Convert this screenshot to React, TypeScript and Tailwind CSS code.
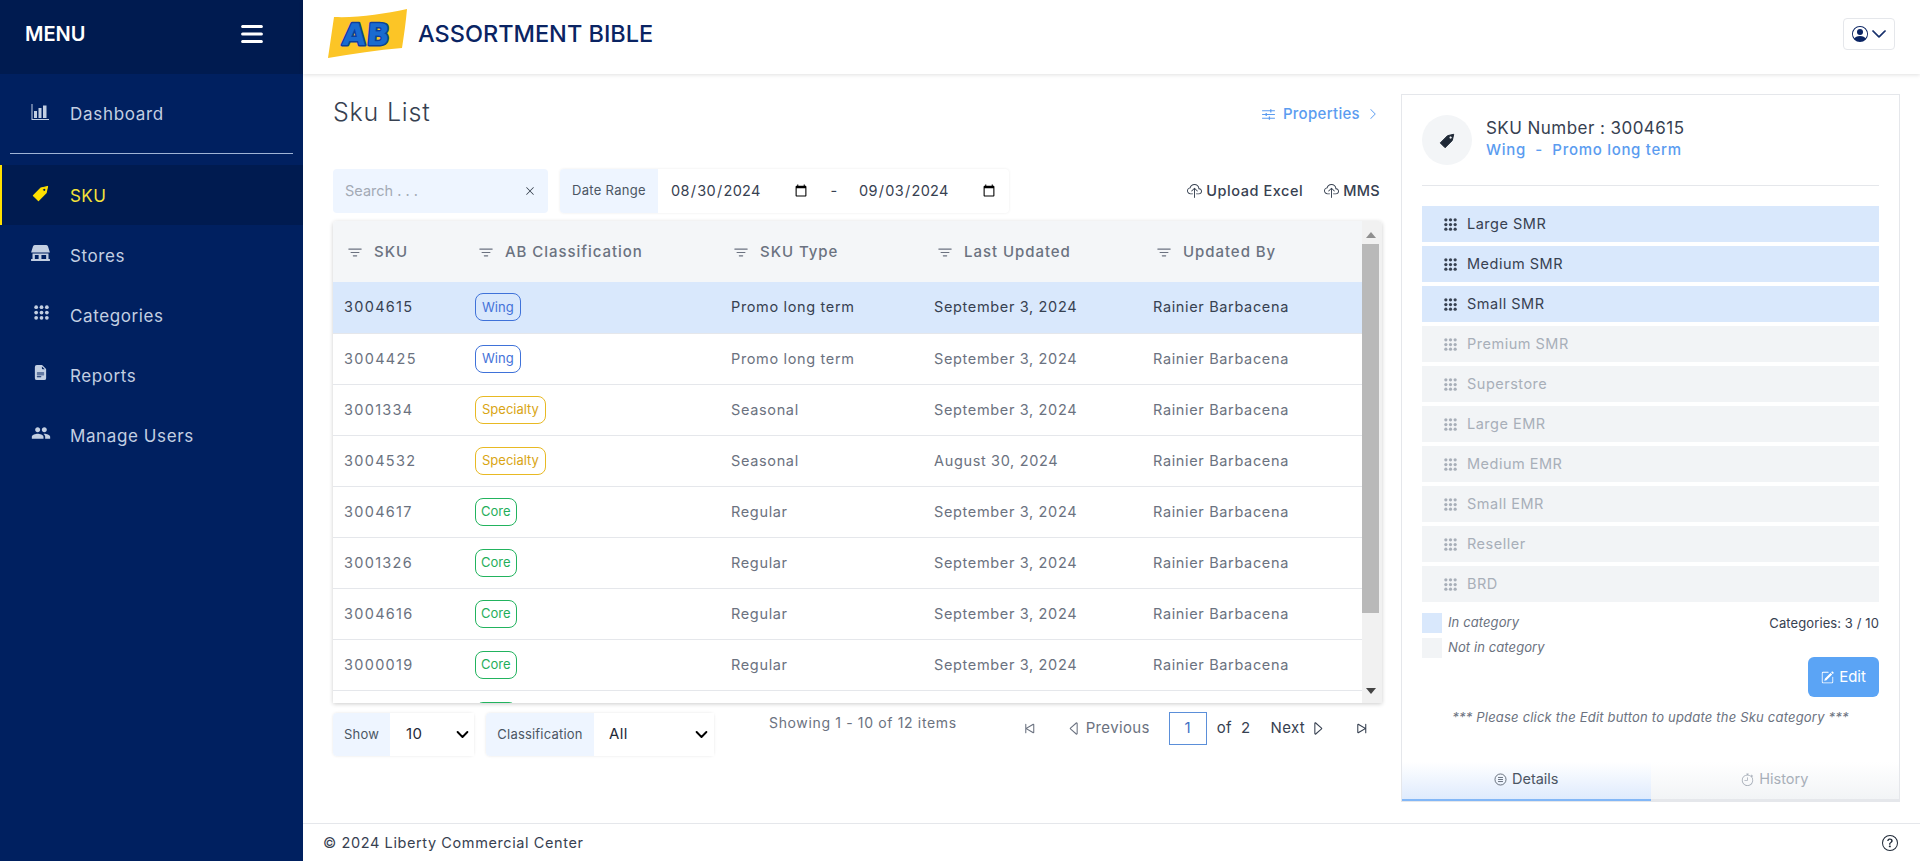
import React from "react";
import {
  BsFilter, BsFileEarmarkTextFill, BsCloudUpload, BsSkipStart, BsSkipEnd,
  BsCaretLeft, BsCaretRight, BsPencilSquare, BsQuestionCircle, BsPersonCircle, BsChevronDown,
  BsChevronRight, BsStopwatch, BsXLg, BsList,
} from "react-icons/bs";
import { MdPeople } from "react-icons/md";

const Tag = ({ className }: { className?: string }) => (
  <svg viewBox="0 0 24 24" className={className} fill="currentColor" stroke="currentColor" strokeWidth="1.4" strokeLinejoin="round">
    <path fillRule="evenodd" d="M1.8 15.4 12 5.2 20.8 3.2 18.8 12 8.6 22.2Z M16.4 5.6a2.2 2.2 0 1 0 2.2 2.2 2.2 2.2 0 0 0-2.2-2.2Z" />
  </svg>
);

const Bars = ({ className }: { className?: string }) => (
  <svg viewBox="0 0 17 16" className={className} fill="currentColor">
    <path d="M0 0h1v15h17v1H0z" />
    <rect x="2.5" y="7" width="3" height="7" />
    <rect x="7" y="4" width="3" height="10" />
    <rect x="11.5" y="1.5" width="3.5" height="12.5" />
  </svg>
);

const Store = ({ className }: { className?: string }) => (
  <svg viewBox="0 0 20 17" className={className} fill="currentColor">
    <path d="M4 0h12a2 2 0 0 1 2 1.6L20 8H0l2-6.4A2 2 0 0 1 4 0Z" />
    <path fillRule="evenodd" d="M1.5 9h17v6H20v2H0v-2h1.5Zm2.5 1.5V15h4v-4.5Zm7 0V15h5v-4.5Z" />
  </svg>
);

const Dots = ({ className }: { className?: string }) => (
  <svg viewBox="0 0 14 14" className={className} fill="currentColor">
    {[2, 7, 12].flatMap((y) => [2, 7, 12].map((x) => <circle key={`${x}-${y}`} cx={x} cy={y} r="1.75" />))}
  </svg>
);

const Details = ({ className }: { className?: string }) => (
  <svg viewBox="0 0 16 16" className={className} fill="none" stroke="currentColor" strokeWidth="1">
    <circle cx="8" cy="8" r="6.8" />
    <path d="M5 5.5h6M5 8h6M5 10.5h6" />
  </svg>
);

const Sliders = ({ className }: { className?: string }) => (
  <svg viewBox="0 0 14 12" className={className} fill="none" stroke="currentColor" strokeWidth="1.1">
    <path d="M0 2h14M0 6h14M0 10h14" />
    <path d="M9.5 0.3v3.4M4.5 4.3v3.4M8 8.3v3.4" strokeWidth="1.4" />
  </svg>
);

const nav = [
  { label: "Stores", icon: <Store className="w-[19px] h-[16px]" /> },
  { label: "Categories", icon: <Dots className="w-[15px] h-[15px] ml-[3px]" /> },
  { label: "Reports", icon: <BsFileEarmarkTextFill className="w-[15px] h-[17px] ml-[2px]" /> },
  { label: "Manage Users", icon: <MdPeople className="w-[20px] h-[20px]" /> },
];

type Row = [string, "Wing" | "Specialty" | "Core", string, string];
const rows: Row[] = [
  ["3004615", "Wing", "Promo long term", "September 3, 2024"],
  ["3004425", "Wing", "Promo long term", "September 3, 2024"],
  ["3001334", "Specialty", "Seasonal", "September 3, 2024"],
  ["3004532", "Specialty", "Seasonal", "August 30, 2024"],
  ["3004617", "Core", "Regular", "September 3, 2024"],
  ["3001326", "Core", "Regular", "September 3, 2024"],
  ["3004616", "Core", "Regular", "September 3, 2024"],
  ["3000019", "Core", "Regular", "September 3, 2024"],
  ["3000021", "Core", "Regular", "September 3, 2024"],
];

const badge: Record<string, string> = {
  Wing: "border-[#3f72d9] text-[#4472d9] px-[6px]",
  Specialty: "border-[#e8b923] text-[#d9a514] px-[6px]",
  Core: "border-[#22b35e] text-[#1fae5a] px-[5px]",
};

const heads = [
  ["SKU", "w-[130px] pl-[13px]"],
  ["AB Classification", "w-[256px] pl-[14px]"],
  ["SKU Type", "w-[203px] pl-[13px]"],
  ["Last Updated", "w-[219px] pl-[14px]"],
  ["Updated By", "pl-[14px]"],
];

const td = "h-[51px] border-b border-[#e5e7eb] pl-[12px] text-[14.5px] tracking-[0.65px]";

const cats = ["Large SMR", "Medium SMR", "Small SMR", "Premium SMR", "Superstore", "Large EMR", "Medium EMR", "Small EMR", "Reseller", "BRD"];

export default function App() {
  return (
    <div className="flex h-[861px] w-[1920px] overflow-hidden bg-white text-[#4b5563] [font-family:Inter,'Open_Sans',sans-serif]">
      {/* Sidebar */}
      <aside className="w-[303px] shrink-0 bg-[#002060] text-[#c3cfe2] flex flex-col">
        <div className="h-[74px] pb-[6px] bg-[#001b50] flex items-center justify-between pl-[25px] pr-[36px]">
          <span className="text-white text-[20px] font-semibold leading-none">MENU</span>
          <BsList className="w-[30px] h-[30px] text-white stroke-[0.6px] stroke-white" />
        </div>
        <div className="h-[80px] mx-[10px] pl-[21px] flex items-center border-b border-[#9fb4d6]">
          <Bars className="w-[18px] h-[16px] mr-[21px] -mt-[3px]" />
          <span className="pt-[3px] text-[17px] tracking-[0.7px]">Dashboard</span>
        </div>
        <div className="mt-[11px] h-[60px] bg-[#001b50] border-l-[2px] border-[#ffe000] text-[#f5e23a] flex items-center pl-[30px]">
          <Tag className="w-[18px] h-[18px] text-[#ffe000] mr-[20px] -mt-[5px]" />
          <span className="pt-[3px] text-[17px] tracking-[0.4px]">SKU</span>
        </div>
        {nav.map((n) => (
          <div key={n.label} className="h-[60px] flex items-center">
            <div className="w-[70px] pl-[31px] flex items-center -mt-[5px]">{n.icon}</div>
            <span className="pt-[3px] text-[17px] tracking-[0.6px]">{n.label}</span>
          </div>
        ))}
      </aside>

      {/* Main */}
      <div className="flex-1 flex flex-col min-w-0">
        <header className="h-[74px] pb-[6px] shrink-0 flex items-center justify-between pl-[25px] pr-[25px] shadow-[0_1px_4px_rgba(0,0,0,0.12)] relative">
          <div className="flex items-center">
            <svg viewBox="0 0 80 50" className="w-[80px] h-[50px]">
              <path d="M6 8 C30 9 55 5 79 0 C78 12 76 26 74 39 C50 41 24 45 0 49 C2 35 4 22 6 8Z" fill="#fcc526" />
              <text x="37" y="37" textAnchor="middle" fontFamily="'DejaVu Sans',sans-serif" fontWeight="700" fontSize="30" letterSpacing="1" fill="#1a6bd0" stroke="#0c3f9c" strokeWidth="3" strokeLinejoin="round" paintOrder="stroke" transform="skewX(-5) translate(4 -1)">AB</text>
            </svg>
            <span className="ml-[10px] text-[23.5px] font-medium text-[#0a2463] leading-none">ASSORTMENT BIBLE</span>
          </div>
          <div className="w-[52px] h-[32px] rounded border border-[#e5e7eb] flex items-center justify-center gap-[3px] text-[#0a2463]">
            <BsPersonCircle className="w-[16px] h-[16px]" />
            <BsChevronDown className="w-[16px] h-[16px] stroke-[0.8px] stroke-current" />
          </div>
        </header>

        <main className="flex-1 flex min-h-0 pl-[30px]">
          <section className="w-[1049px] shrink-0 pt-[20px]">
            <div className="h-[75px] flex justify-between">
              <h1 className="text-[25px] leading-[36px] font-light text-[#374151] tracking-[0.8px]">Sku List</h1>
              <div className="flex items-center h-[40px] text-[#5b9cf0] text-[15px] tracking-[0.3px] font-medium gap-[6px] pr-[3px]">
                <Sliders className="w-[13px] h-[11px] mr-[2px]" />
                <span>Properties</span>
                <BsChevronRight className="w-[12px] h-[12px] ml-[1px]" />
              </div>
            </div>

            <div className="h-[44px] flex items-center">
              <div className="w-[215px] h-[44px] bg-[#eef5ff] rounded flex items-center justify-between pl-[12px] pr-[13px]">
                <span className="text-[14.5px] text-[#a3aab5]">Search . . .</span>
                <BsXLg className="w-[10px] h-[10px] text-[#1f2937]" />
              </div>
              <div className="ml-[12px] h-[44px] w-[449px] flex rounded shadow-[0_0_3px_rgba(0,0,0,0.08)]">
                <div className="w-[98px] bg-[#eef5ff] flex items-center justify-center text-[13px] tracking-[0.3px] rounded-l text-[#4b5563]">Date Range</div>
                <div className="flex-1 flex items-center pl-[12px] text-[14.5px] tracking-[0.3px] text-[#374151]">
                  <input type="date" defaultValue="2024-08-30" className="w-[140px] bg-transparent outline-none" />
                  <span className="w-[48px] text-center">-</span>
                  <input type="date" defaultValue="2024-09-03" className="w-[140px] bg-transparent outline-none" />
                </div>
              </div>
              <div className="ml-auto flex items-center text-[14.5px] tracking-[0.55px] text-[#374151] font-medium">
                <BsCloudUpload className="w-[15px] h-[15px] mr-[4px]" />
                <span>Upload Excel</span>
                <BsCloudUpload className="w-[15px] h-[15px] ml-[21px] mr-[4px]" />
                <span className="pr-[2px] tracking-[0.3px]">MMS</span>
              </div>
            </div>

            <div className="mt-[8px] h-[482px] w-[1049px] flex overflow-hidden rounded-t shadow-[0_1px_4px_rgba(0,0,0,0.2)]">
              <div className="flex-1 min-w-0 overflow-hidden">
                <table className="w-full table-fixed">
                  <thead>
                    <tr>
                      {heads.map(([h, w]) => (
                        <th key={h} className={`h-[61px] pt-[2px] bg-[#f4f6f8] text-left font-medium ${w}`}>
                          <span className="flex items-center text-[15px] text-[#6b7280] tracking-[0.95px]">
                            <BsFilter className="w-[18px] h-[18px] mr-[10px] text-[#6b7280]" />
                            {h}
                          </span>
                        </th>
                      ))}
                    </tr>
                  </thead>
                  <tbody>
                    {rows.map((r, i) => (
                      <tr key={r[0]} className={i === 0 ? "bg-[#d9e8fc] text-[#374151]" : "text-[#6b7280]"}>
                        <td className="h-[51px] border-b border-[#e5e7eb] pl-[11px] text-[14.5px] tracking-[1.3px]">{r[0]}</td>
                        <td className="h-[51px] border-b border-[#e5e7eb] pl-[12px]">
                          <span className={`inline-flex h-[28px] items-center rounded-lg border text-[13px] ${badge[r[1]]}`}>{r[1]}</span>
                        </td>
                        <td className={td}>{r[2]}</td>
                        <td className={td}>{r[3]}</td>
                        <td className={td}>Rainier Barbacena</td>
                      </tr>
                    ))}
                  </tbody>
                </table>
              </div>
              {/* scrollbar */}
              <div className="w-[20px] shrink-0 bg-[#f1f1f1] flex flex-col pr-[3px]">
                <div className="h-[23px] flex items-center justify-center">
                  <svg viewBox="0 0 10 6" className="w-[10px] h-[6px] mt-[4px]" fill="#8f8f8f"><path d="M5 0l5 6H0z" /></svg>
                </div>
                <div className="h-[369px] bg-[#b9b9b9]" />
                <div className="flex-1 flex items-end justify-center pb-[9px]">
                  <svg viewBox="0 0 10 6" className="w-[10px] h-[6px]" fill="#444"><path d="M5 6L10 0H0z" /></svg>
                </div>
              </div>
            </div>

            <div className="mt-[10px] flex items-start">
              <div className="h-[43px] w-[141px] flex rounded shadow-[0_0_3px_rgba(0,0,0,0.1)]">
                <div className="w-[57px] bg-[#eef5ff] flex items-center justify-center text-[13px] tracking-[0.2px] rounded-l">Show</div>
                <div className="relative flex-1 min-w-0">
                  <select defaultValue="10" className="appearance-none w-full h-full pl-[16px] text-[15px] tracking-[0.4px] text-[#1f2937] bg-white outline-none">
                    <option>10</option>
                  </select>
                  <BsChevronDown className="absolute right-[5px] top-[15px] w-[13px] h-[13px] text-black stroke-[1.4px] stroke-black pointer-events-none" />
                </div>
              </div>
              <div className="ml-[12px] h-[43px] w-[228px] flex rounded shadow-[0_0_3px_rgba(0,0,0,0.1)]">
                <div className="w-[108px] bg-[#eef5ff] flex items-center justify-center text-[13px] tracking-[0.2px] rounded-l">Classification</div>
                <div className="relative flex-1 min-w-0">
                  <select defaultValue="All" className="appearance-none w-full h-full pl-[15px] text-[15px] tracking-[0.4px] text-[#1f2937] bg-white outline-none">
                    <option>All</option>
                  </select>
                  <BsChevronDown className="absolute right-[6px] top-[15px] w-[13px] h-[13px] text-black stroke-[1.4px] stroke-black pointer-events-none" />
                </div>
              </div>
              <span className="ml-[55px] text-[14px] tracking-[0.65px] text-[#6b7280] leading-[20px]">Showing 1 - 10 of 12 items</span>
              <div className="ml-auto flex items-center h-[33px] text-[15px] tracking-[0.35px] text-[#6b7280] pr-[12px] -mt-[1px]">
                <BsSkipStart className="w-[17px] h-[17px]" />
                <BsCaretLeft className="w-[17px] h-[17px] ml-[28px] mr-[3px]" />
                <span>Previous</span>
                <span className="ml-[19px] w-[38px] h-[33px] border border-[#5b8fd9] flex items-center justify-center text-[#3f6fc4]">1</span>
                <span className="ml-[10px] text-[#374151]">of</span>
                <span className="ml-[9px] text-[#374151]">2</span>
                <span className="ml-[20px] text-[#374151]">Next</span>
                <BsCaretRight className="w-[17px] h-[17px] ml-[4px] text-[#374151]" />
                <BsSkipEnd className="w-[17px] h-[17px] ml-[27px] text-[#374151]" />
              </div>
            </div>
          </section>

          {/* Right panel */}
          <aside className="ml-[19px] mt-[20px] mb-[21px] w-[499px] shrink-0 border border-[#e5e7eb] flex flex-col">
            <div className="mx-[20px] h-[91px] pt-[20px] flex border-b border-[#e5e7eb]">
              <div className="w-[50px] h-[50px] rounded-full bg-[#f3f5f7] flex items-center justify-center">
                <Tag className="w-[17px] h-[17px] text-[#1f2937]" />
              </div>
              <div className="ml-[14px]">
                <div className="text-[17px] tracking-[0.45px] leading-[22px] mt-[2px] text-[#374151]">SKU Number : 3004615</div>
                <div className="text-[15px] tracking-[0.7px] leading-[20px] font-medium text-[#5b9cf0] mt-[1px]">Wing&nbsp; - &nbsp;Promo long term</div>
              </div>
            </div>
            <div className="mx-[20px] mt-[20px] flex flex-col gap-[4px]">
              {cats.map((c, i) => (
                <div key={c} className={`h-[36px] flex items-center pl-[22px] text-[14.5px] tracking-[0.5px] ${i < 3 ? "bg-[#d9e8fc] text-[#374151]" : "bg-[#f2f4f6] text-[#a8afb9]"}`}>
                  <Dots className="w-[13px] h-[13px] mr-[10px]" />
                  {c}
                </div>
              ))}
            </div>
            <div className="mx-[20px] mt-[11px] relative flex flex-col gap-[5px] text-[13px] tracking-[0.1px] italic text-[#6b7280]">
              <div className="flex items-center"><span className="w-[20px] h-[20px] bg-[#d9e8fc] mr-[6px]" />In category</div>
              <div className="flex items-center"><span className="w-[20px] h-[20px] bg-[#f2f4f6] mr-[6px]" />Not in category</div>
              <span className="absolute right-0 top-[1px] not-italic text-[#374151]">Categories: 3 / 10</span>
            </div>
            <div className="mx-[20px] -mt-[1px] flex justify-end">
              <div className="w-[71px] h-[40px] rounded-md bg-[#5ba4f5] text-white flex items-center justify-center text-[15px] gap-[5px]">
                <BsPencilSquare className="w-[13px] h-[13px]" /> Edit
              </div>
            </div>
            <div className="mt-[12px] text-center italic text-[13px] tracking-[0.2px] leading-[16px] text-[#6b7280]">*** Please click the Edit button to update the Sku category ***</div>
            <div className="mt-auto h-[39px] flex text-[14.5px]">
              <div className="w-1/2 pb-[3px] flex items-center justify-center gap-[5px] border-b-[2px] border-[#82b7f7] bg-gradient-to-b from-white to-[#dfebfd] text-[#4b5563]">
                <Details className="w-[13px] h-[13px]" /> Details
              </div>
              <div className="w-1/2 pb-[3px] flex items-center justify-center gap-[5px] border-b-[2px] border-[#e5e7eb] bg-gradient-to-b from-white to-[#f2f4f6] text-[#a8afb9]">
                <BsStopwatch className="w-[13px] h-[13px]" /> History
              </div>
            </div>
          </aside>
        </main>

        <footer className="h-[38px] shrink-0 border-t border-[#e5e7eb] flex items-center justify-between pl-[20px] pr-[22px] text-[14.5px] tracking-[0.6px] text-[#374151]">
          <span>© 2024 Liberty Commercial Center</span>
          <BsQuestionCircle className="w-[16px] h-[16px] text-[#1f2937]" />
        </footer>
      </div>
    </div>
  );
}
